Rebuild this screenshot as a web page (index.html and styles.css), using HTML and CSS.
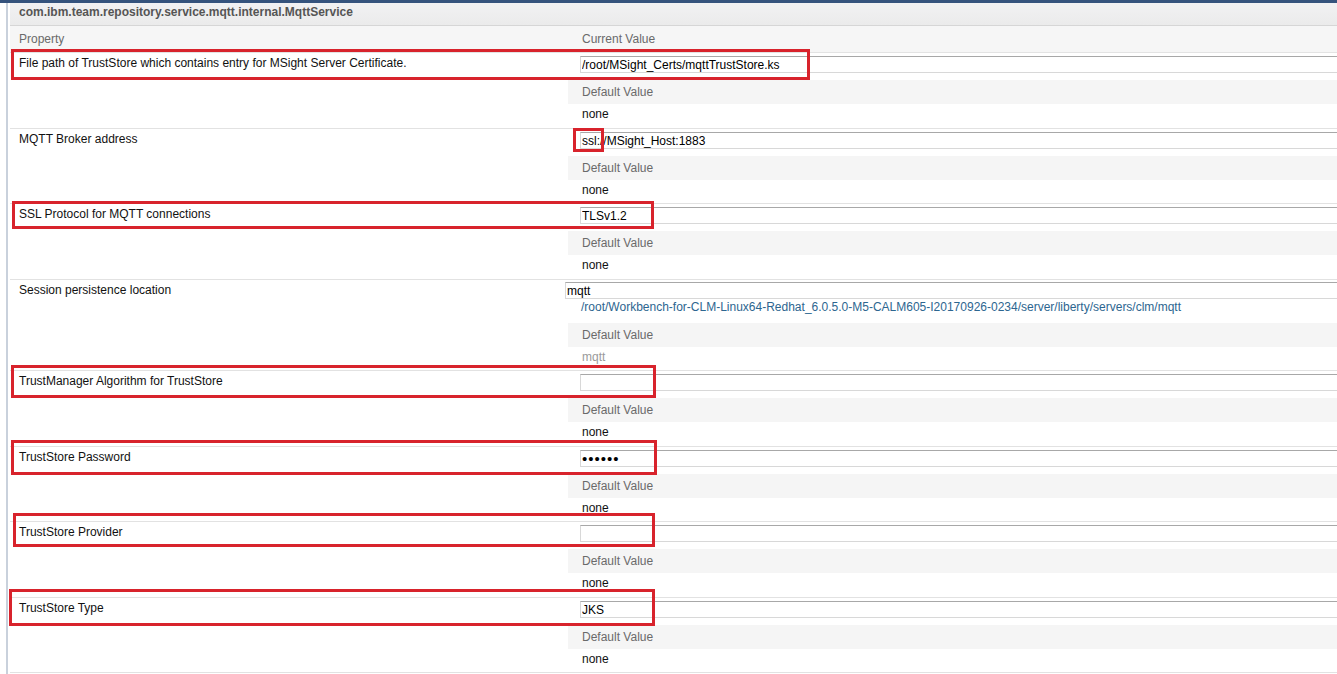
FILE: index.html
```html
<!DOCTYPE html>
<html>
<head>
<meta charset="utf-8">
<title>MqttService</title>
<link rel="stylesheet" href="styles.css">
</head>
<body>
<div class="topbar"></div>
<div class="panel">
  <div class="title">com.ibm.team.repository.service.mqtt.internal.MqttService</div>
  <div class="colhead">
    <div class="ch-label">Property</div>
    <div class="ch-value">Current Value</div>
  </div>
  <div class="rows">
    <div class="row">
      <div class="label">File path of TrustStore which contains entry for MSight Server Certificate.</div>
      <div class="value">
        <input class="field" type="text" value="/root/MSight_Certs/mqttTrustStore.ks">
        <div class="dv">Default Value</div>
        <div class="dvv">none</div>
      </div>
    </div>
    <div class="row">
      <div class="label">MQTT Broker address</div>
      <div class="value">
        <input class="field" type="text" value="ssl://MSight_Host:1883">
        <div class="dv">Default Value</div>
        <div class="dvv">none</div>
      </div>
    </div>
    <div class="row">
      <div class="label">SSL Protocol for MQTT connections</div>
      <div class="value">
        <input class="field" type="text" value="TLSv1.2">
        <div class="dv">Default Value</div>
        <div class="dvv">none</div>
      </div>
    </div>
    <div class="row row-path">
      <div class="label">Session persistence location</div>
      <div class="value">
        <input class="field field-wide" type="text" value="mqtt">
        <div class="path">/root/Workbench-for-CLM-Linux64-Redhat_6.0.5.0-M5-CALM605-I20170926-0234/server/liberty/servers/clm/mqtt</div>
        <div class="dv">Default Value</div>
        <div class="dvv dvv-muted">mqtt</div>
      </div>
    </div>
    <div class="row">
      <div class="label">TrustManager Algorithm for TrustStore</div>
      <div class="value">
        <input class="field" type="text" value="">
        <div class="dv">Default Value</div>
        <div class="dvv">none</div>
      </div>
    </div>
    <div class="row">
      <div class="label">TrustStore Password</div>
      <div class="value">
        <input class="field field-pass" type="password" value="secret">
        <div class="dv">Default Value</div>
        <div class="dvv">none</div>
      </div>
    </div>
    <div class="row">
      <div class="label">TrustStore Provider</div>
      <div class="value">
        <input class="field" type="text" value="">
        <div class="dv">Default Value</div>
        <div class="dvv">none</div>
      </div>
    </div>
    <div class="row">
      <div class="label">TrustStore Type</div>
      <div class="value">
        <input class="field" type="text" value="JKS">
        <div class="dv">Default Value</div>
        <div class="dvv">none</div>
      </div>
    </div>
  </div>
</div>

<div class="mark mark-1"></div>
<div class="mark mark-2"></div>
<div class="mark mark-3"></div>
<div class="mark mark-4"></div>
<div class="mark mark-5"></div>
<div class="mark mark-6"></div>
<div class="mark mark-7"></div>
</body>
</html>
```

FILE: styles.css
```css
html, body {
  margin: 0;
  padding: 0;
  background: #ffffff;
}

body {
  position: relative;
  width: 1337px;
  height: 674px;
  overflow: hidden;
  font-family: "Liberation Sans", Arial, sans-serif;
  font-size: 12px;
  color: #111111;
}

.topbar {
  height: 3px;
  background: #35537d;
}

.panel {
  margin-left: 6px;
  border-left: 2px solid #c9d1dc;
  padding-left: 2px;
  height: 671px;
}

.title {
  height: 22px;
  line-height: 19px;
  padding-left: 9px;
  font-weight: bold;
  color: #555555;
  background: linear-gradient(#f1f1f3, #ebebeb);
  border-bottom: 1px solid #d6d6d6;
}

.colhead {
  display: grid;
  grid-template-columns: 558px 1fr;
  height: 26px;
  line-height: 26px;
  background: #f6f6f6;
  color: #6a6a6a;
  border-bottom: 1px solid #e3e3e3;
}

.ch-label {
  padding-left: 9px;
}

.ch-value {
  padding-left: 14px;
}

.row {
  display: grid;
  grid-template-columns: 558px 1fr;
  border-bottom: 1px solid #e2e2e2;
}

.label {
  padding: 3px 0 0 9px;
  line-height: 14px;
  color: #111111;
}

.value {
  display: flex;
  flex-direction: column;
}

.field {
  display: block;
  box-sizing: border-box;
  margin: 3px 0 0 12px;
  height: 17px;
  width: calc(100% - 12px);
  padding: 0 1px;
  border: 1px solid #d8d8d8;
  border-top-color: #a8a8a8;
  border-right: 0;
  outline: none;
  background: #ffffff;
  font-family: "Liberation Sans", Arial, sans-serif;
  font-size: 12px;
  line-height: 15px;
  color: #000000;
}

.field-pass {
  font-size: 15px;
  letter-spacing: 1px;
}

.field-wide {
  margin: 2px 0 0 -3px;
  width: calc(100% + 3px);
}

.path {
  height: 17px;
  line-height: 16px;
  padding-left: 13px;
  color: #2d6690;
  white-space: nowrap;
}

.dv {
  margin-top: 7px;
  height: 24px;
  line-height: 24px;
  padding-left: 14px;
  background: #f5f5f5;
  color: #6a6a6a;
}

.dvv {
  height: 23px;
  line-height: 20px;
  padding-left: 14px;
  color: #111111;
}

.row:nth-child(odd) .dvv {
  height: 24px;
  line-height: 21px;
}

.dvv-muted {
  color: #9a9a9a;
}

.mark {
  position: absolute;
  box-sizing: border-box;
  border: 3px solid #d8232c;
}

.mark-1 { left: 11px; top: 49px; width: 799px; height: 31px; }
.mark-2 { left: 573px; top: 128px; width: 31px; height: 24px; }
.mark-3 { left: 12px; top: 201px; width: 642px; height: 28px; }
.mark-4 { left: 11px; top: 365px; width: 645px; height: 33px; }
.mark-5 { left: 11px; top: 440px; width: 646px; height: 35px; }
.mark-6 { left: 13px; top: 513px; width: 642px; height: 34px; }
.mark-7 { left: 9px; top: 589px; width: 646px; height: 37px; }
```
